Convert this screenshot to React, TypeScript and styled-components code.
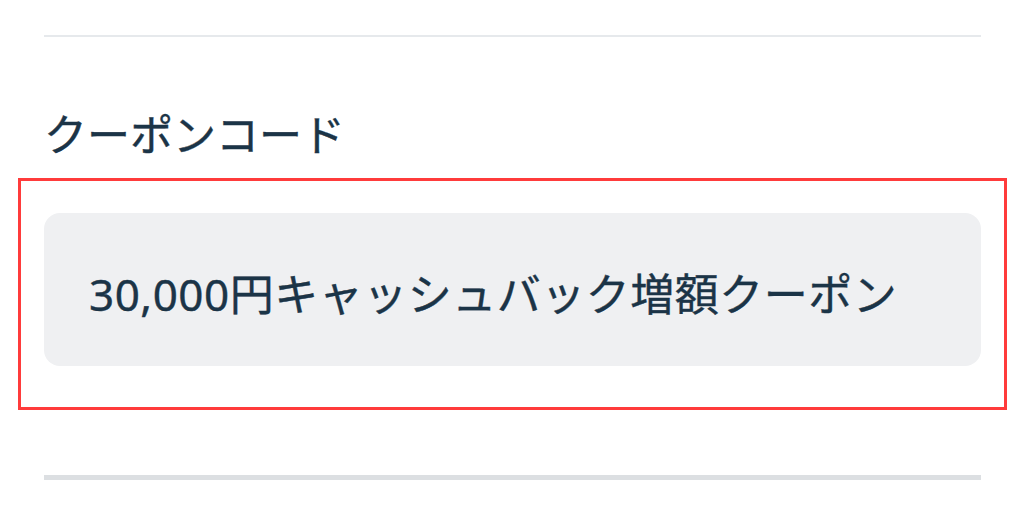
import styled, { createGlobalStyle } from 'styled-components'

const GlobalStyle = createGlobalStyle`
  html, body {
    margin: 0;
    padding: 0;
    background: #ffffff;
  }
  body {
    font-family: "Noto Sans", "Noto Sans CJK JP", sans-serif;
    color: #1b3447;
  }
`

const Page = styled.main`
  display: flex;
  flex-direction: column;
  padding: 35px 43px 0 44px;
`

const Divider = styled.hr<{ $thick?: boolean }>`
  margin: 0;
  border: none;
  height: ${(p) => (p.$thick ? '5px' : '2px')};
  background: ${(p) => (p.$thick ? '#dcdfe2' : '#e6e9ec')};
`

const Heading = styled.h2`
  margin: 68px 0 0;
  font-size: 43px;
  font-weight: 400;
  line-height: 60px;
  -webkit-text-stroke: 0.4px #1b3447;
`

const Highlight = styled.section`
  margin: 13px -26px 0;
  padding: 32px 23px 41px;
  border: 3px solid #ff3b3b;
`

const CouponBox = styled.div`
  display: flex;
  align-items: center;
  height: 153px;
  padding: 8px 45px 0;
  box-sizing: border-box;
  border-radius: 16px;
  background: #eff0f2;
  font-size: 44px;
  font-weight: 400;
  letter-spacing: 0.5px;
  line-height: 1;
  white-space: nowrap;
  -webkit-text-stroke: 0.4px #1b3447;
`

const Spacer = styled.div`
  height: 65px;
`

export default function App() {
  return (
    <>
      <GlobalStyle />
      <Page>
        <Divider />
        <Heading>クーポンコード</Heading>
        <Highlight>
          <CouponBox>30,000円キャッシュバック増額クーポン</CouponBox>
        </Highlight>
        <Spacer />
        <Divider $thick />
      </Page>
    </>
  )
}
